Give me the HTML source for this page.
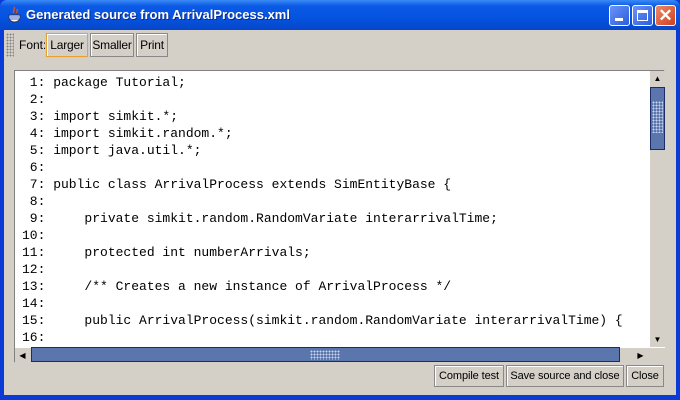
<!DOCTYPE html>
<html><head><meta charset="utf-8"><style>
*{margin:0;padding:0;box-sizing:border-box}
html,body{width:680px;height:400px;overflow:hidden}
body{background:#0a3bd6;font-family:"Liberation Sans",sans-serif;position:relative}
.tb{position:absolute;left:0;top:0;width:680px;height:30px;background:linear-gradient(#3a8bf5,#0b5ae6 20%,#0553e0 60%,#0646c8);border-radius:7px 7px 0 0}
.title{position:absolute;left:26px;top:7px;color:#fff;font-weight:bold;font-size:13px;text-shadow:1px 1px #0a2a8a;white-space:nowrap}
.wb{position:absolute;top:5px;width:21px;height:21px;border:1px solid #fff;border-radius:3px}
.client{position:absolute;left:4px;top:30px;width:672px;height:365px;background:#d4d0c8}
.btn{position:absolute;height:24px;border:1px solid #888;box-shadow:inset 1px 1px #fff;background:#d4d0c8;font-size:12px;line-height:22px;text-align:center;color:#000;white-space:nowrap;overflow:hidden;letter-spacing:-0.2px}
.code{position:absolute;left:14px;top:70px;width:651px;height:293px;border:1px solid #808080;border-right-color:#fff;border-bottom-color:#fff;background:#fff;overflow:hidden}
pre{font-family:"Liberation Mono",monospace;font-size:13px;line-height:17px;position:absolute;left:7px;top:3px;color:#000}
.sb{position:absolute;background:#d4d0c8}
.thumb{position:absolute;background:#5a76ac;border:1px solid #1a2d6a}
.dots{position:absolute;background-image:radial-gradient(#c8d4ee 0.8px,transparent 1px);background-size:3px 3px}
.arr{position:absolute;width:15px;height:15px;font-size:8px;text-align:center;line-height:15px;color:#000}
.bb{font-size:11px;letter-spacing:-0.1px}
</style></head><body>
<div class="tb"></div>
<svg style="position:absolute;left:7px;top:6px" width="16" height="18"><path d="M7 1c2 2-2 3 0 6M10 3c1 2-1 3 0 4" stroke="#e05010" stroke-width="1.5" fill="none"/><path d="M2 9h11v3q-1 4-5.5 4T2 12z" fill="#fff" stroke="#335" stroke-width="1"/><path d="M3 11h9M3 13h9" stroke="#4060c0"/></svg>
<div class="title">Generated source from ArrivalProcess.xml</div>
<div class="wb" style="left:609px;background:linear-gradient(135deg,#6d93f5,#2a5ee0)"><div style="position:absolute;left:5px;top:12px;width:8px;height:3px;background:#fff"></div></div>
<div class="wb" style="left:632px;background:linear-gradient(135deg,#6d93f5,#2a5ee0)"><div style="position:absolute;left:4px;top:4px;width:11px;height:11px;border:1px solid #fff;border-top-width:3px"></div></div>
<div class="wb" style="left:655px;background:linear-gradient(135deg,#ec8a6a,#d0401c);font:bold 17px 'Liberation Sans';color:#fff;text-align:center;line-height:19px">✕</div>
<div class="client"></div>
<div class="dots" style="left:6px;top:33px;width:8px;height:24px;background-image:radial-gradient(#888 0.8px,transparent 1px)"></div>
<div style="position:absolute;left:19px;top:38px;font-size:12px">Font:</div>
<div class="btn" style="left:46px;top:33px;width:42px;border:1px solid #e8a030;box-shadow:inset 1px 1px #fff,0 0 0 1px #ccc">Larger</div>
<div class="btn" style="left:90px;top:33px;width:44px">Smaller</div>
<div class="btn" style="left:136px;top:33px;width:32px">Print</div>
<div class="code"><pre> 1: package Tutorial;
 2:
 3: import simkit.*;
 4: import simkit.random.*;
 5: import java.util.*;
 6:
 7: public class ArrivalProcess extends SimEntityBase {
 8:
 9:     private simkit.random.RandomVariate interarrivalTime;
10:
11:     protected int numberArrivals;
12:
13:     /** Creates a new instance of ArrivalProcess */
14:
15:     public ArrivalProcess(simkit.random.RandomVariate interarrivalTime) {
16:</pre></div>
<div class="sb" style="left:650px;top:71px;width:15px;height:276px"></div>
<div class="arr" style="left:650px;top:71px">▲</div>
<div class="thumb" style="left:650px;top:87px;width:15px;height:63px"></div>
<div class="dots" style="left:652px;top:101px;width:11px;height:32px"></div>
<div class="arr" style="left:650px;top:332px">▼</div>
<div class="sb" style="left:15px;top:347px;width:650px;height:16px;border-top:1px solid #fff"></div>
<div class="arr" style="left:15px;top:348px">◀</div>
<div class="thumb" style="left:31px;top:347px;width:589px;height:15px"></div>
<div class="dots" style="left:310px;top:350px;width:30px;height:10px"></div>
<div class="arr" style="left:633px;top:348px">▶</div>
<div class="btn bb" style="left:434px;top:365px;width:70px;height:22px;line-height:20px">Compile test</div>
<div class="btn bb" style="left:506px;top:365px;width:118px;height:22px;line-height:20px">Save source and close</div>
<div class="btn bb" style="left:626px;top:365px;width:38px;height:22px;line-height:20px">Close</div>
</body></html>
